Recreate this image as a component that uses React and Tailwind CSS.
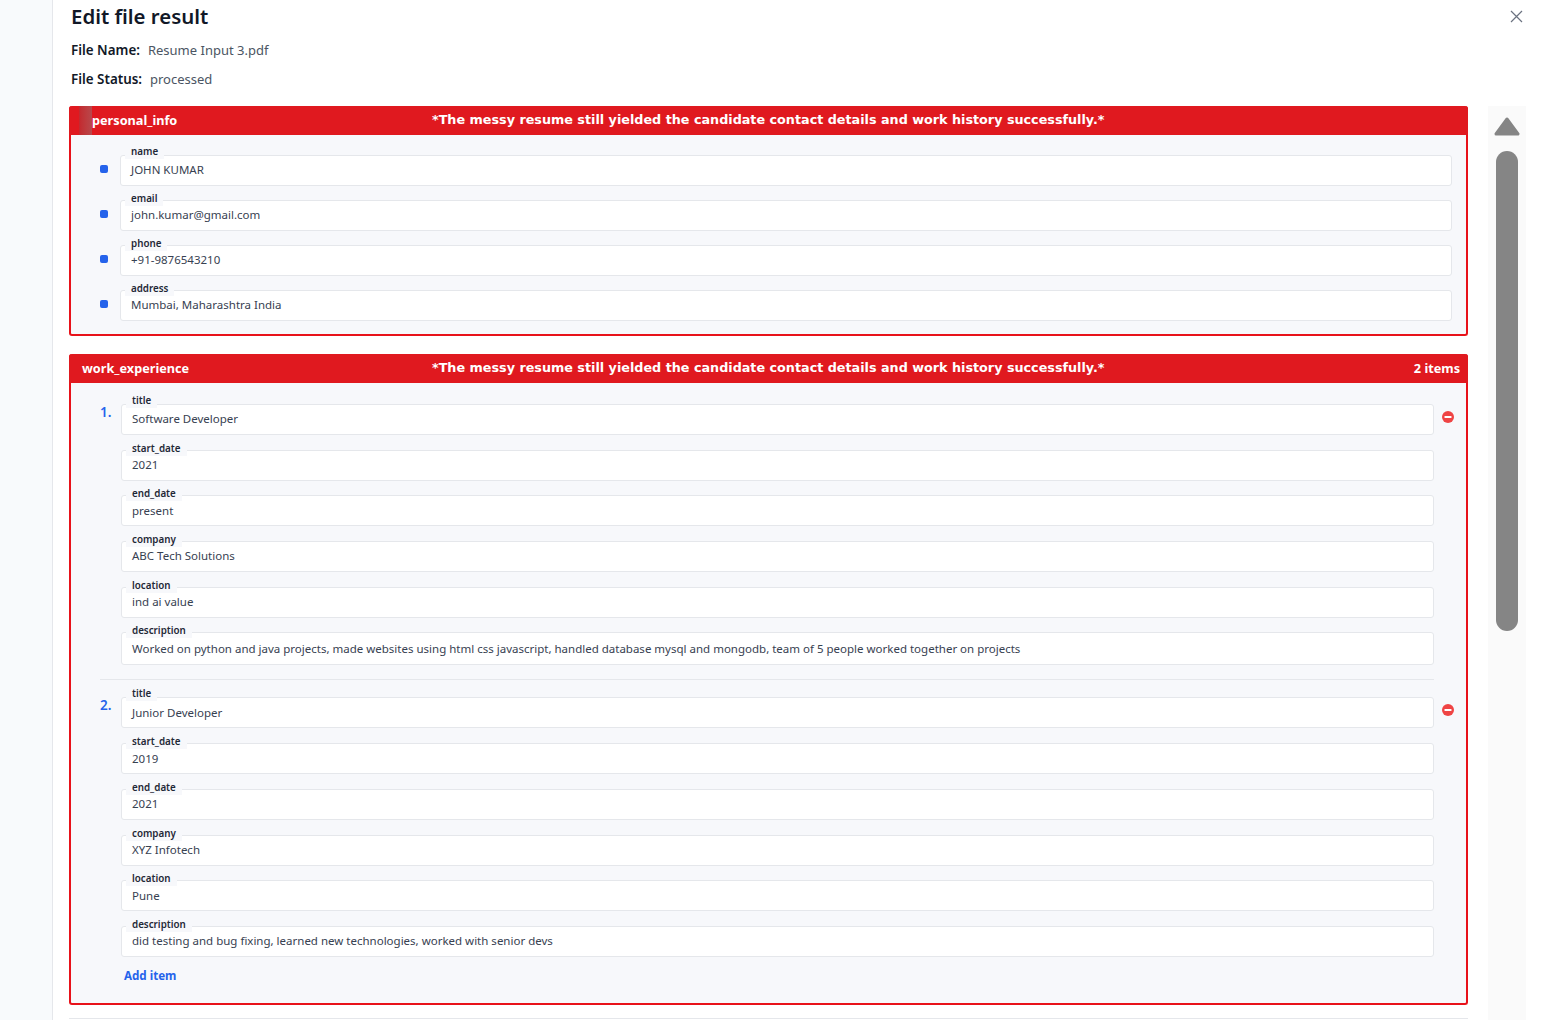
const NOTE = '*The messy resume still yielded the candidate contact details and work history successfully.*';

const personalInfo = [
  { label: 'name', value: 'JOHN KUMAR' },
  { label: 'email', value: 'john.kumar@gmail.com' },
  { label: 'phone', value: '+91-9876543210' },
  { label: 'address', value: 'Mumbai, Maharashtra India' },
];

const jobs = [
  [
    { label: 'title', value: 'Software Developer' },
    { label: 'start_date', value: '2021' },
    { label: 'end_date', value: 'present' },
    { label: 'company', value: 'ABC Tech Solutions' },
    { label: 'location', value: 'ind ai value' },
    {
      label: 'description',
      value:
        'Worked on python and java projects, made websites using html css javascript, handled database mysql and mongodb, team of 5 people worked together on projects',
      tall: true,
    },
  ],
  [
    { label: 'title', value: 'Junior Developer' },
    { label: 'start_date', value: '2019' },
    { label: 'end_date', value: '2021' },
    { label: 'company', value: 'XYZ Infotech' },
    { label: 'location', value: 'Pune' },
    { label: 'description', value: 'did testing and bug fixing, learned new technologies, worked with senior devs' },
  ],
];

function Field({ label, value, tall, first }) {
  return (
    <div className="relative flex-1">
      <span
        className={`absolute left-[5px] bg-[#f7f8fb] px-[6px] text-[9.8px] leading-[14px] font-semibold text-[#1f2937] ${first ? '-top-[10px]' : '-top-[8px]'}`}
      >
        {label}
      </span>
      <div
        className={`flex items-center rounded-[3px] border border-[#e5e7eb] bg-white pb-[1px] pl-[10px] text-[11.5px] text-[#374151] ${tall ? 'h-[33px]' : 'h-[31px]'}`}
      >
        {value}
      </div>
    </div>
  );
}

function SectionHeader({ title, right, indent, toggle }) {
  return (
    <div className="relative flex h-[29px] items-center justify-between rounded-t-[3px] bg-[#e0191f] pr-2 text-[12.7px] font-bold text-white">
      {toggle && <span className="absolute left-[10px] h-full w-[13px] bg-gradient-to-r from-[#c4282e] to-[#b8474b]" />}
      <span className={`relative ${indent}`}>{title}</span>
      <span className="absolute left-[363px] -mt-px font-['DejaVu_Sans',sans-serif] text-[12.75px] font-bold whitespace-nowrap">{NOTE}</span>
      <span>{right}</span>
    </div>
  );
}

function RemoveIcon() {
  return (
    <svg width="12" height="12" viewBox="0 0 12 12" className="shrink-0">
      <circle cx="6" cy="6" r="6" fill="#ef4444" />
      <rect x="2.5" y="4.9" width="7" height="2.2" rx="0.6" fill="#fff" />
    </svg>
  );
}

export default function App() {
  return (
    <div className="flex h-[1020px] overflow-hidden bg-white font-['Noto_Sans',sans-serif]">
      <div className="w-[53px] shrink-0 border-r border-[#e5e7eb] bg-[#f8fafc]" />

      <div className="min-w-0 flex-1">
        <div className="flex items-start justify-between pt-[4px] pr-[19px] pl-[18px]">
          <h1 className="text-[20.4px] leading-[25px] font-semibold text-[#111827]">Edit file result</h1>
          <svg width="13" height="13" viewBox="0 0 13 13" className="mt-[6px]" fill="none" stroke="#6b7280" strokeWidth="1.2">
            <path d="M1 1l11 11M12 1L1 12" />
          </svg>
        </div>

        <div className="mt-[12px] flex flex-col gap-[10px] pl-[18px] text-[13px] leading-[19px] text-[#4b5563]">
          <p><b className="mr-2 text-[13.4px] font-semibold text-[#111827]">File Name:</b>Resume Input 3.pdf</p>
          <p><b className="mr-2 text-[13.4px] font-semibold text-[#111827]">File Status:</b>processed</p>
        </div>

        <div className="mt-[17px] flex gap-[20px] pl-[16px]">
          <div className="w-[1399px] shrink-0">
            <section className="h-[230px] rounded-[3px] border-2 border-t-0 border-[#e8121a] bg-[#f7f8fb]">
              <div className="-mx-[2px]">
                <SectionHeader title="personal_info" indent="pl-[23px]" toggle />
              </div>
              <div className="flex flex-col gap-[14px] pt-[20px] pr-[14px] pl-[29px]">
                {personalInfo.map((item, i) => (
                  <div key={item.label} className="flex items-center gap-[12px]">
                    <span className="mt-[-4px] h-[8px] w-[8px] rounded-[2px] bg-[#2563eb]" />
                    <Field {...item} first={i === 0} />
                  </div>
                ))}
              </div>
            </section>

            <section className="mt-[18px] h-[651px] rounded-[3px] border-2 border-t-0 border-[#e8121a] bg-[#f7f8fb]">
              <div className="-mx-[2px]">
                <SectionHeader title="work_experience" right="2 items" indent="pl-[13px]" />
              </div>
              <div className="flex flex-col pt-[21px] pr-[13px] pl-[29px]">
                {jobs.map((fields, i) => (
                  <div key={i} className={i ? 'mt-[14px] mr-[19px] border-t border-[#e5e7eb] pt-[17px]' : 'mr-[19px]'}>
                    <div className="flex flex-col gap-[14.7px]">
                      {fields.map((field, j) => (
                        <div key={field.label} className="-mr-[19px] flex items-start">
                          <span className="w-[21px] shrink-0 text-[13.5px] leading-[17px] font-semibold text-[#2563eb]">
                            {j === 0 ? `${i + 1}.` : ''}
                          </span>
                          <Field {...field} first={j === 0} />
                          <span className="mt-[7px] ml-[8px] flex w-[11px] shrink-0">
                            {j === 0 && <RemoveIcon />}
                          </span>
                        </div>
                      ))}
                    </div>
                  </div>
                ))}
                <button className="mt-[10px] ml-[24px] self-start text-[11.6px] font-bold text-[#2563eb]">Add item</button>
              </div>
            </section>

            <div className="mt-[13px] h-px bg-[#e5e7eb]" />
          </div>

          <div className="flex h-[914px] w-[38px] shrink-0 flex-col items-center bg-[#fafafa] pt-[11px]">
            <svg width="26" height="19" viewBox="0 0 26 19">
              <path d="M13 2L24 17H2Z" fill="#858585" stroke="#858585" strokeWidth="3" strokeLinejoin="round" />
            </svg>
            <div className="mt-[15px] h-[480px] w-[22px] rounded-[11px] bg-[#858585]" />
          </div>
        </div>
      </div>
    </div>
  );
}
